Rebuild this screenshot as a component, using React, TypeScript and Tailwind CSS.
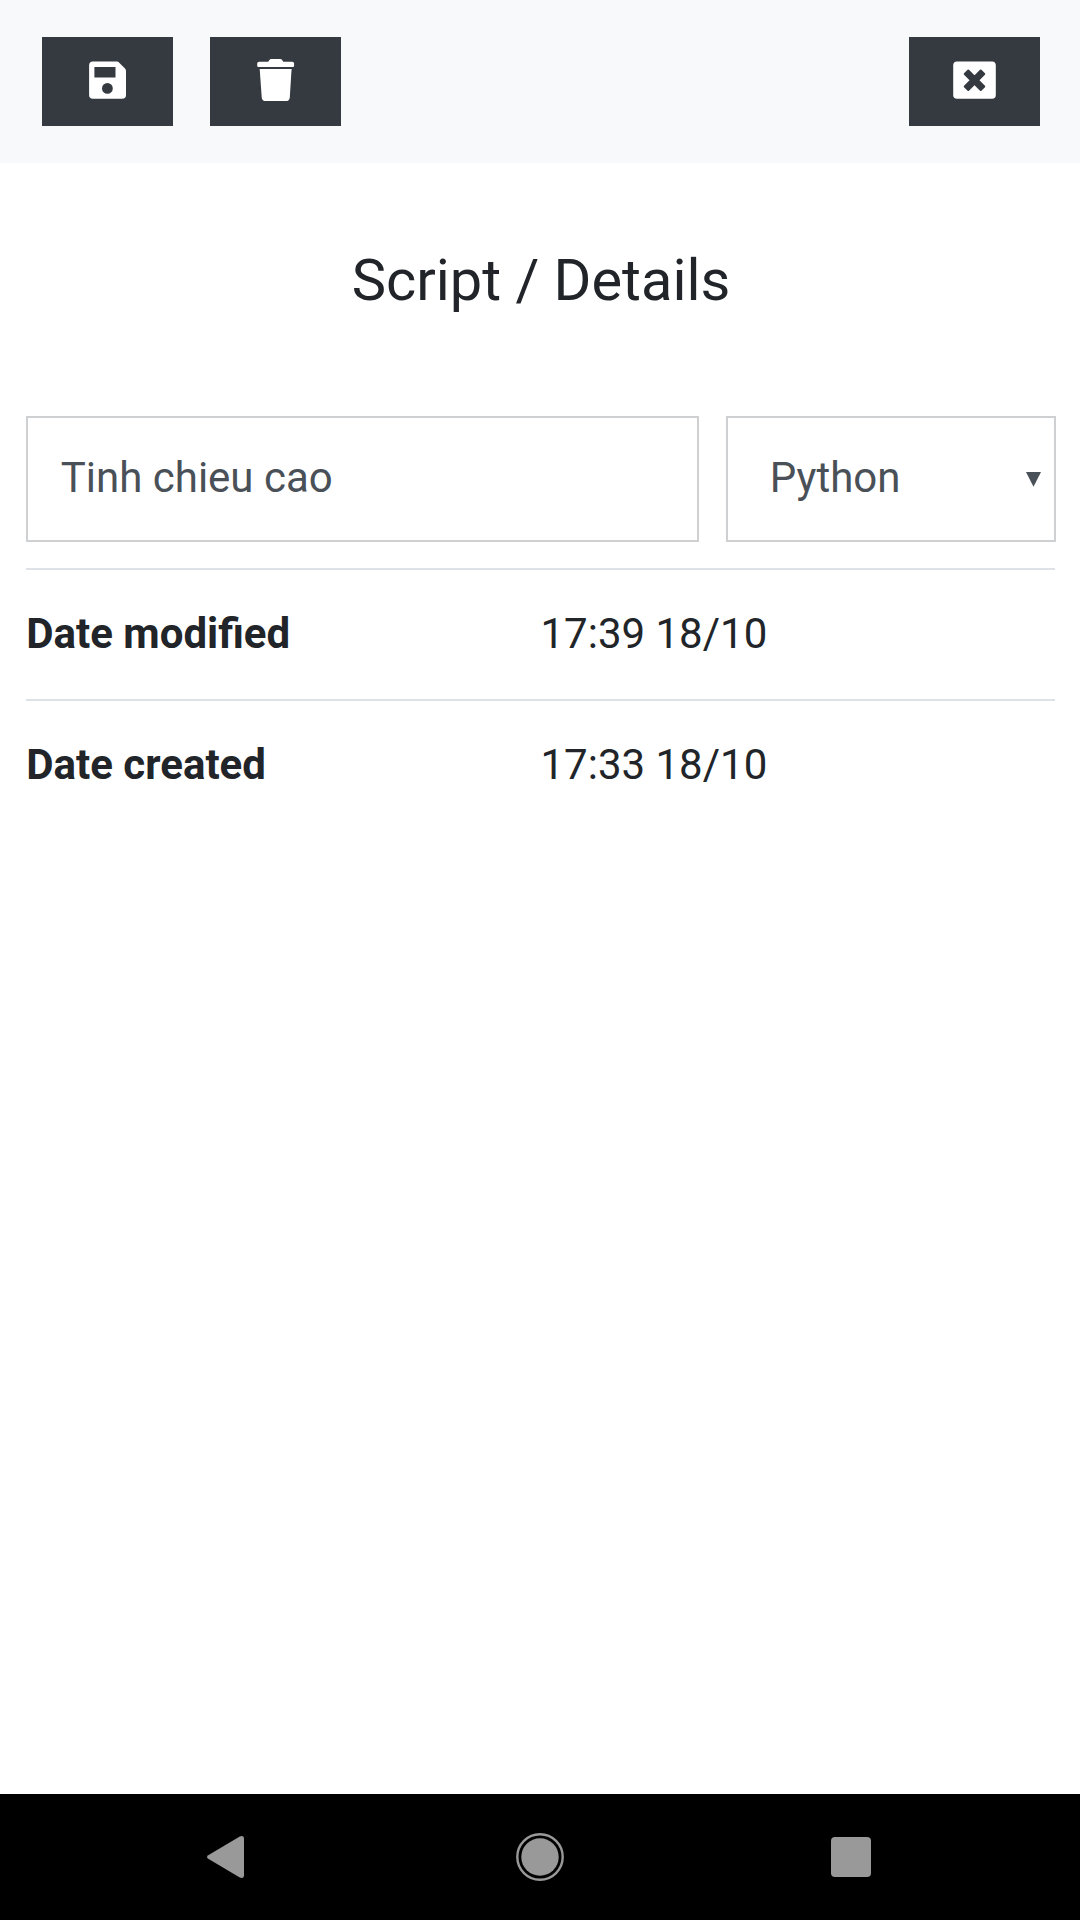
import type { ReactNode } from "react";

function ToolButton({ label, children }: { label: string; children: ReactNode }) {
  return (
    <button aria-label={label} className="h-[89px] w-[131px] bg-[#343a40] text-white">
      {children}
    </button>
  );
}

function SaveIcon() {
  return (
    <svg className="block" width="131" height="89" viewBox="0 0 131 89" fill="currentColor">
      <path
        fillRule="evenodd"
        d="M50.9 24.6H74.4C75.6 24.6 76.4 24.9 77.2 25.7L82.8 31.3C83.6 32.1 84 33 84 34.1V57.9Q84 61.7 80.2 61.7H50.9Q47.1 61.7 47.1 57.9V28.4Q47.1 24.6 50.9 24.6ZM52.4 30V40.6H73.5V30ZM65.4 46a5.4 5.4 0 1 0 0 10.8a5.4 5.4 0 1 0 0-10.8Z"
      />
    </svg>
  );
}

function TrashIcon() {
  return (
    <svg className="block" width="131" height="89" viewBox="0 0 131 89" fill="currentColor">
      <path d="M49.2 24.7H58.2L59.2 23.2Q60 21.9 61.4 21.9H70.1Q71.5 21.9 72.3 23.2L73.3 24.7H82.2Q84.1 24.7 84.1 26.6V28.8Q84.1 30 82.9 30H48.4Q47.2 30 47.2 28.8V26.6Q47.2 24.7 49.2 24.7Z" />
      <path d="M49.7 31.9H81.6L79.8 60.2Q79.5 64.1 75.6 64.1H55.9Q52 64.1 51.7 60.2Z" />
    </svg>
  );
}

function CloseIcon() {
  return (
    <svg className="block" width="131" height="89" viewBox="0 0 131 89">
      <rect x="44.2" y="24.6" width="42.6" height="37.1" rx="3.8" fill="currentColor" />
      <path
        transform="translate(65.5 43.2) rotate(45)"
        d="M-2.5-11.3H2.5V-2.5H11.3V2.5H2.5V11.3H-2.5V2.5H-11.3V-2.5H-2.5Z"
        fill="#343a40"
        stroke="#343a40"
        strokeWidth="2"
        strokeLinejoin="round"
      />
    </svg>
  );
}

const details = [
  { name: "Date modified", value: "17:39 18/10" },
  { name: "Date created", value: "17:33 18/10" },
];

export default function App() {
  return (
    <div className="flex h-[1920px] w-[1080px] flex-col bg-white font-['Roboto',sans-serif] text-[42px] leading-[63px] text-[#212529]">
      <header className="flex h-[163px] shrink-0 gap-[37px] bg-[#f8f9fb] pt-[37px] pr-10 pl-[42px]">
        <ToolButton label="Save">
          <SaveIcon />
        </ToolButton>
        <ToolButton label="Delete">
          <TrashIcon />
        </ToolButton>
        <div className="ml-auto">
          <ToolButton label="Close">
            <CloseIcon />
          </ToolButton>
        </div>
      </header>

      <main className="flex flex-1 flex-col pt-[82px] pr-6 pl-[26px]">
        <h1 className="text-center text-[57.75px] leading-[70px]">Script / Details</h1>

        <div className="mt-[101px] flex h-[126px] gap-[27px] text-[#495057]">
          <div className="w-[673px] border-2 border-[#ced0d1] pt-[28px] pl-[32.75px]">
            Tinh chieu cao
          </div>
          <div className="flex flex-1 justify-between border-2 border-[#ced0d1] pt-[28px] pr-[13px] pl-[41.75px]">
            <span>Python</span>
            <svg className="mt-[26px]" width="15" height="15" viewBox="0 0 15 15">
              <path d="M0 0H15L7.5 14.8Z" fill="currentColor" />
            </svg>
          </div>
        </div>

        <dl className="mt-[26px] mr-px">
          {details.map((item) => (
            <div
              key={item.name}
              className="grid h-[131px] grid-cols-2 border-t-2 border-[#dee2e6] pt-8"
            >
              <dt className="pl-[0.25px] font-bold">{item.name}</dt>
              <dd>{item.value}</dd>
            </div>
          ))}
        </dl>
      </main>

      <nav className="h-[126px] shrink-0 bg-black">
        <svg className="block" width="1080" height="126" viewBox="0 0 1080 126" fill="#999999">
          <path d="M208.2 61.2L239.8 42.5Q244 41 244 45V81Q244 85 239.8 83.5L208.2 64.8Q205.8 63 208.2 61.2Z" />
          <circle cx="540" cy="63" r="22.7" fill="none" stroke="#999999" strokeWidth="2.4" />
          <circle cx="540" cy="63" r="18.7" />
          <rect x="831" y="43" width="40" height="40" rx="4" />
        </svg>
      </nav>
    </div>
  );
}
